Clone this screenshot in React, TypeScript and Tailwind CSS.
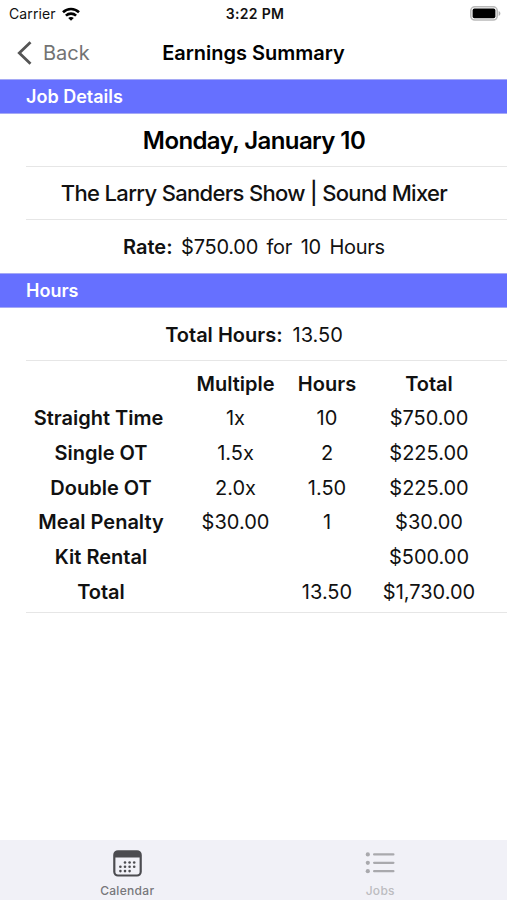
const rows = [
  { label: "Straight Time\u00a0", multiple: "1x", hours: "10", total: "$750.00" },
  { label: "Single OT", multiple: "1.5x", hours: "2", total: "$225.00" },
  { label: "Double OT", multiple: "2.0x", hours: "1.50", total: "$225.00" },
  { label: "Meal Penalty", multiple: "$30.00", hours: "1", total: "$30.00" },
  { label: "Kit Rental", multiple: "", hours: "", total: "$500.00" },
  { label: "Total", multiple: "", hours: "13.50", total: "$1,730.00" },
];

function WifiIcon() {
  return (
    <svg width="18" height="14" viewBox="0 0 18 14" fill="none" stroke="#000" strokeWidth="2.6">
      <path d="M1 5.2C5.5 0.9 12.5 0.9 17 5.2" />
      <path d="M3.9 8.6C6.8 5.9 11.2 5.9 14.1 8.6" />
      <path d="M9 13.8L6.2 11C7.8 9.6 10.2 9.6 11.8 11Z" fill="#000" stroke="none" />
    </svg>
  );
}

function BatteryIcon() {
  return (
    <svg width="31" height="15" viewBox="0 0 31 15">
      <rect x="0.8" y="0.8" width="26.4" height="13.2" rx="4" fill="#fff" stroke="#b9b9b9" strokeWidth="1.6" />
      <rect x="2.6" y="2.6" width="22.8" height="9.6" rx="1.8" fill="#000" />
      <path d="M28.6 5v5c1.1-.5 1.8-1.4 1.8-2.5S29.7 5.500 28.600 5Z" fill="#b0b0b0" />
    </svg>
  );
}

function CalendarIcon() {
  const dots = [
    [12, 12.5], [16.6, 12.5], [21.2, 12.5],
    [7.4, 16.8], [12, 16.8], [16.6, 16.8], [21.2, 16.8],
    [7.4, 21.1], [12, 21.1], [16.6, 21.1],
  ];
  return (
    <svg width="29" height="27" viewBox="0 0 29 27">
      <rect x="1.3" y="1.3" width="26.4" height="24.2" rx="3.7" fill="none" stroke="#4c4c50" strokeWidth="2.2" />
      <path d="M1 7.5V5a4 4 0 0 1 4-4h19a4 4 0 0 1 4 4v2.5Z" fill="#4c4c50" />
      {dots.map(([x, y], i) => (
        <circle key={i} cx={x} cy={y} r="1.3" fill="#4c4c50" />
      ))}
    </svg>
  );
}

function ListIcon() {
  return (
    <svg width="30" height="22" viewBox="0 0 30 22" fill="#a9a9ad">
      {[2.4, 10.8, 19.2].map((y) => (
        <g key={y}>
          <circle cx="2.8" cy={y} r="2.1" />
          <rect x="8" y={y - 1.1} width="21.5" height="2.2" rx="1.1" />
        </g>
      ))}
    </svg>
  );
}

function SectionHeader({ title }: { title: string }) {
  return (
    <h2 className="h-[35px] shrink-0 border-y border-[#a5a9f5] bg-[#6670ff] pl-[26px] text-[18px] leading-[33px] font-semibold text-white">
      {title}
    </h2>
  );
}

export default function App() {
  return (
    <div className="flex h-[900px] w-[507px] flex-col overflow-hidden bg-white font-['Inter',sans-serif] text-[20px] text-[#111]">
      {/* Status bar */}
      <div className="grid h-[27px] shrink-0 grid-cols-3 items-center pr-[6px] pl-[9px]">
        <div className="flex items-center gap-[6px] text-[14px] tracking-[0.1px]">
          <span>Carrier</span>
          <WifiIcon />
        </div>
        <span className="text-center text-[14px] font-semibold tracking-[0.3px]">3:22 PM</span>
        <div className="flex justify-end">
          <BatteryIcon />
        </div>
      </div>

      {/* Navigation bar */}
      <header className="grid h-[52px] shrink-0 grid-cols-[1fr_auto_1fr] items-center pb-px">
        <button className="flex items-center gap-[11px] pl-[17px] text-[#737373]">
          <svg width="15" height="24" viewBox="0 0 15 24" fill="none" stroke="#555" strokeWidth="2.8">
            <path d="M13.5 1.2L2.3 12l11.2 10.8" />
          </svg>
          <span>Back</span>
        </button>
        <h1 className="font-semibold text-black">Earnings Summary</h1>
      </header>

      <SectionHeader title="Job Details" />
      <section className="flex flex-col text-center">
        <div className="ml-[26px] h-[53px] border-b border-[#e6e6e6] pr-[25px] text-[24px] leading-[54px] font-semibold tracking-[-0.6px] text-black">
          Monday, January 10
        </div>
        <div className="ml-[26px] h-[53px] border-b border-[#e6e6e6] pr-[25px] text-[22px] leading-[53px] font-medium tracking-[-0.67px]">
          The Larry Sanders Show | Sound Mixer
        </div>
        <div className="flex h-[53px] items-center justify-center gap-[8.5px] pt-px pl-px tracking-[-0.25px]">
          <span className="font-semibold tracking-normal">Rate:</span>
          <span>$750.00</span>
          <span>for</span>
          <span>10</span>
          <span>Hours</span>
        </div>
      </section>

      <SectionHeader title="Hours" />
      <div className="ml-[26px] flex h-[53px] shrink-0 items-center justify-center gap-[10px] border-b border-[#e6e6e6] pt-[2px] pr-[25px]">
        <span className="font-semibold">Total Hours:</span>
        <span>13.50</span>
      </div>
      <div className="ml-[26px] flex h-[252px] shrink-0 flex-col border-b border-[#e6e6e6] pt-[5.6px] text-center leading-[34.7px]">
        <div className="grid grid-cols-[150px_119px_64px_140px] font-semibold">
          <span />
          <span>Multiple</span>
          <span>Hours</span>
          <span>Total</span>
        </div>
        {rows.map((row) => (
          <div key={row.label} className="grid grid-cols-[150px_119px_64px_140px]">
            <span className="font-semibold">{row.label}</span>
            <span>{row.multiple}</span>
            <span>{row.hours}</span>
            <span>{row.total}</span>
          </div>
        ))}
      </div>

      {/* Tab bar */}
      <nav className="mt-auto grid h-[60px] shrink-0 grid-cols-2 bg-[#f1f1f7] text-[12px] font-medium tracking-[0.3px]">
        <div className="flex flex-col items-center pt-[10px] pl-px text-[#77777b]">
          <CalendarIcon />
          <span className="mt-[5px] leading-[18px]">Calendar</span>
        </div>
        <div className="flex flex-col items-center pt-[12px] text-[#bcbcc0]">
          <ListIcon />
          <span className="mt-[8px] leading-[18px]">Jobs</span>
        </div>
      </nav>
    </div>
  );
}
